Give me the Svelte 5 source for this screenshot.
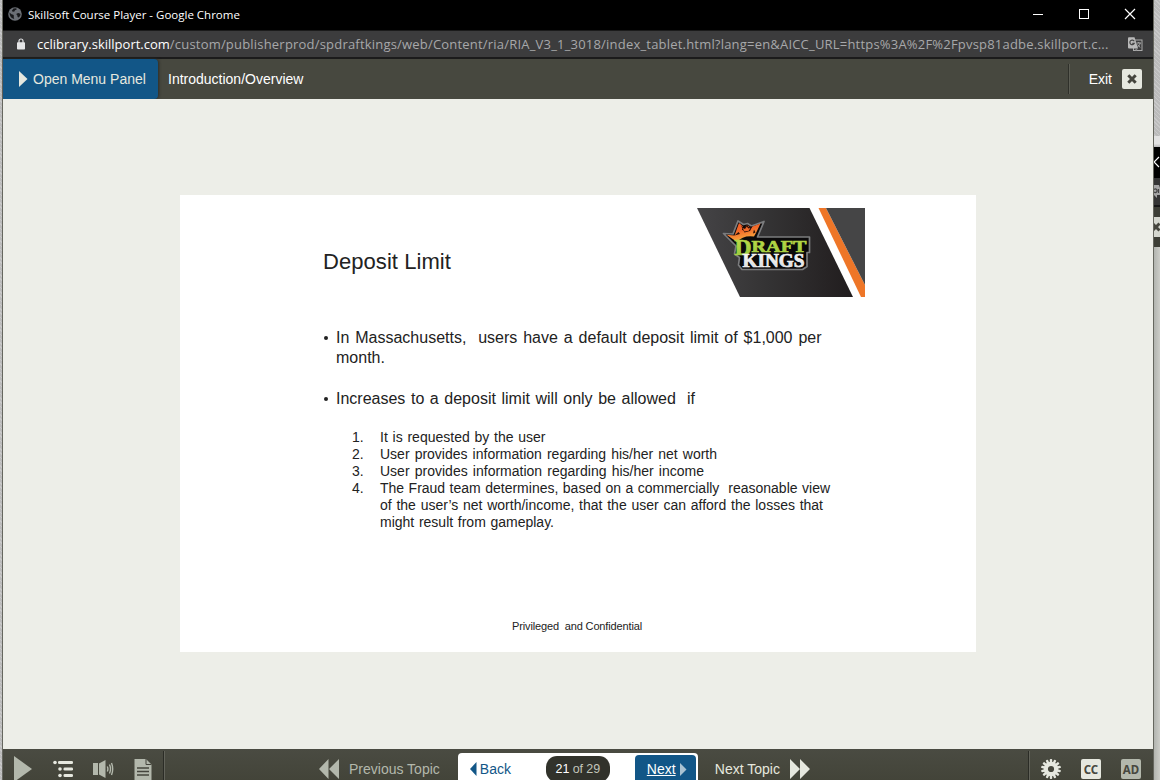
<script>
  const host = 'cclibrary.skillport.com';
  const path = '/custom/publisherprod/spdraftkings/web/Content/ria/RIA_V3_1_3018/index_tablet.html?lang=en&AICC_URL=https%3A%2F%2Fpvsp81adbe.skillport.c...';

  const bullets = [
    [
      { text: 'In Massachusetts,\u00a0 users have a default deposit limit of $1,000 per', ws: 1.45 },
      { text: 'month.', ws: 0 }
    ],
    [{ text: 'Increases to a deposit limit will only be allowed\u00a0 if', ws: 1.12 }]
  ];

  const conditions = [
    [{ text: 'It is requested by the user', ws: 0.88 }],
    [{ text: 'User provides information regarding his/her net worth', ws: 1.18 }],
    [{ text: 'User provides information regarding his/her income', ws: 1.3 }],
    [
      { text: 'The Fraud team determines, based on a commercially\u00a0 reasonable view', ws: 0.57 },
      { text: 'of the user’s net worth/income, that the user can afford the losses that', ws: 0.86 },
      { text: 'might result from gameplay.', ws: 0.77 }
    ]
  ];

  const teeth = Array.from({ length: 14 }, (_, i) => (i * 360) / 14);
</script>

<div class="desktop">
  <div class="window">
    <div class="titlebar">
      <svg class="globe" width="14" height="14" viewBox="0 0 14 14">
        <circle cx="7" cy="7" r="6.8" fill="#6b6f75" />
        <path d="M1.500 5.500 3.500 7.200l1.800.6.6 1-.2 1.300.5 1.900-1.200-.4C2.700 10.600 1.500 8.500 1.500 5.500zM5.500 1.500 8.300 1.200l.4 1.300-1.700.7-.6 1.300-1.600.3L3.800 3.700zM8.800 6.500l2-.4 1.700 1-.3 1.700-1.400 1.800-1.200-.5-.2-1.600-1-.9z" fill="#17181a" />
      </svg>
      <span class="caption">Skillsoft Course Player - Google Chrome</span>
      <div class="controls">
        <svg width="12" height="12" viewBox="0 0 12 12"><path d="M1 6.500h10" stroke="#fff" /></svg>
        <svg width="12" height="12" viewBox="0 0 12 12"><rect x="1.500" y="1.500" width="9" height="9" fill="none" stroke="#fff" /></svg>
        <svg width="12" height="12" viewBox="0 0 12 12"><path d="M1 1l10 10M11 1 1 11" stroke="#fff" stroke-width="1.200" /></svg>
      </div>
    </div>

    <div class="urlbar">
      <svg class="lock" width="8" height="12" viewBox="0 0 8 12">
        <path d="M2 5V3a2 2 0 0 1 4 0v2" fill="none" stroke="#e4e5e6" stroke-width="1.200" />
        <rect y="4.300" width="8" height="7.200" rx=".8" fill="#e4e5e6" />
      </svg>
      <span class="host">{host}</span><span class="path">{path}</span>
      <svg class="translate" width="15" height="15" viewBox="0 0 15 15">
        <rect x="5.500" y="3" width="8.500" height="10.500" fill="#3c3c3d" stroke="#aaa" />
        <path d="M0 1.200Q0 .3 1 .3h5.500L10 11.500H1q-1 0-1-1z" fill="#b9b9b9" />
        <path d="M6.200 4.200A2.300 2.300 0 1 0 6.300 6.300H4.300" fill="none" stroke="#444" stroke-width="1.200" />
        <path d="M8.500 6h4.500M10.700 5v1M12.200 6c-.4 2-1.700 3.500-3 4.200M9.700 7.500c.6 1.300 1.500 2.300 2.600 2.900" fill="none" stroke="#aaa" />
        <path d="M7 11.500h3l-2 2.500z" fill="#888" />
      </svg>
    </div>

    <header>
      <button class="menu-btn">
        <svg width="9" height="16" viewBox="0 0 9 16"><path d="M0 0l8.500 8L0 16z" fill="#e6e8df" /></svg>
        Open Menu Panel
      </button>
      <span class="topic">Introduction/Overview</span>
      <div class="exit">
        <span>Exit</span>
        <svg width="20" height="20" viewBox="0 0 20 20">
          <rect width="20" height="20" rx="2" fill="#e6e8df" />
          <path d="M6.300 6.300l7.400 7.400M13.700 6.300l-7.400 7.400" stroke="#45453d" stroke-width="3" />
        </svg>
      </div>
    </header>

    <main>
      <article class="slide">
        <div class="slide-head">
          <h1>Deposit Limit</h1>
          <svg class="brand" width="168" height="89" viewBox="0 0 168 89">
            <defs>
              <linearGradient id="panel"><stop offset="0" stop-color="#454446" /><stop offset=".45" stop-color="#343334" /><stop offset="1" stop-color="#211d1e" /></linearGradient>
              <linearGradient id="crown" x1="0" y1="0" x2=".4" y2="1"><stop offset="0" stop-color="#f05a28" /><stop offset=".5" stop-color="#f26a2a" /><stop offset="1" stop-color="#fbb040" /></linearGradient>
              <linearGradient id="lime" x1="0" y1="0" x2="0" y2="1"><stop offset="0" stop-color="#c6de4a" /><stop offset="1" stop-color="#8fc63e" /></linearGradient>
              <linearGradient id="silver" x1="0" y1="0" x2="0" y2="1"><stop offset="0" stop-color="#fff" /><stop offset="1" stop-color="#d3d5d8" /></linearGradient>
            </defs>
            <path d="M0 0h112.500L156 89H43z" fill="url(#panel)" />
            <path d="M121.500 0h7.500l39 77v12h-4z" fill="#ee7628" />
            <path d="M129 0h39v77z" fill="#454546" />
            <path d="M26.500 25.500l9.500.5 5-13 5.500 3.500 4-1 4 2.500 12.500-4.500-6.500 15.500h52v15.500h-2.500v14l-4.500 3H45l-3.500-4.500 1-7.500-5-3.500 1.500-8-5-5z" fill="#0b0a0b" stroke="#7b7c7e" stroke-width="1.700" stroke-linejoin="round" />
            <path d="M29.500 26.800l8 .8 4.500-12.500 3.800 3.200-.8 3.700 3 .5 1-5 3 .5 1 3.500 2.500-3 8-3-4.500 9.500-2 3.500q-11-1.500-17 5.500z" fill="url(#crown)" />
            <path d="M44 17.500l3 3 2.500-3.500 3 2.500 3-1.500-2.500 5-5.500 1.500zM37.500 27.500l4-3.500 1.500 2zM56 25.500l1-4 1.500 3z" fill="#2a0f08" />
            <path d="M45.500 20l2.500 1 1.800-2.500 1.500 2 2-.5-1.500 2.700-4.300.8z" fill="#f26a2a" />
            <g font-family="Liberation Serif, serif" font-weight="bold" stroke-width=".7">
              <text fill="url(#lime)" stroke="#aed243"><tspan x="37.500" y="47" font-size="22.500" textLength="17" lengthAdjust="spacingAndGlyphs">D</tspan><tspan x="54.500" y="43.500" font-size="17.500" textLength="55" lengthAdjust="spacingAndGlyphs">RAFT</tspan></text>
              <text x="45.500" y="58.800" font-size="18" textLength="62" lengthAdjust="spacingAndGlyphs" fill="url(#silver)" stroke="#f2f2f2">KINGS</text>
            </g>
          </svg>
        </div>

        <ul class="bullets">
          {#each bullets as lines}
            <li>
              {#each lines as line}<div style:word-spacing="{line.ws}px">{line.text}</div>{/each}
            </li>
          {/each}
        </ul>

        <ol class="conditions">
          {#each conditions as lines, i}
            <li>
              <span class="num">{i + 1}.</span>
              <div>{#each lines as line}<div style:word-spacing="{line.ws}px">{line.text}</div>{/each}</div>
            </li>
          {/each}
        </ol>

        <footer class="confidential">Privileged&nbsp; and Confidential</footer>
      </article>
    </main>

    <nav>
      <div class="tools">
        <svg class="play" width="18" height="26" viewBox="0 0 18 26"><path d="M0 0l18 13L0 26z" fill="#b3b8ac" /></svg>
        <svg class="outline" width="20" height="18" viewBox="0 0 20 18">
          <g fill="#e6e8df">
            <circle cx="2" cy="2.500" r="1.800" /><rect x="5" y="1" width="15" height="3" rx="1.300" />
            <circle cx="7" cy="9" r="1.800" /><rect x="10.500" y="7.500" width="9.500" height="3" rx="1.300" />
            <circle cx="7" cy="15.500" r="1.800" /><rect x="10.500" y="14" width="9.500" height="3" rx="1.300" />
          </g>
        </svg>
        <svg class="sound" width="21" height="18" viewBox="0 0 21 18">
          <path d="M0 3h5v12H0zM6 3.500L12.500 0v18L6 14.500z" fill="#b3b8ac" />
          <path d="M14.300 6.500q1.200 2.500 0 5M16.500 4.500q2 4.500 0 9M18.500 3q2.400 6 0 12" fill="none" stroke="#b3b8ac" stroke-width="1.400" />
        </svg>
        <svg class="doc" width="18" height="21" viewBox="0 0 18 21">
          <path d="M1 0h11l5.500 5.500V21H.5V.5z" fill="#b3b8ac" />
          <path d="M12 0v5.500h5.500" fill="none" stroke="#45453d" />
          <path d="M3 9h12M3 12.500h12M3 16h12" stroke="#45453d" stroke-width="1.300" />
        </svg>
      </div>

      <div class="previous">
        <svg width="20" height="20" viewBox="0 0 20 20"><path d="M9.500 0v20L0 10zM20 0v20L10 10z" fill="#b3b8ac" /></svg>
        <span>Previous Topic</span>
      </div>

      <div class="pager">
        <span class="back"><svg width="7" height="14" viewBox="0 0 7 14"><path d="M6.500 0v14L0 7z" fill="#125687" /></svg>Back</span>
        <span class="count"><b>21</b> of 29</span>
        <span class="next"><u>Next</u><svg width="7" height="13" viewBox="0 0 7 13"><path d="M0 0l6.500 6.500L0 13z" fill="#a9c2d2" /></svg></span>
      </div>

      <div class="following">
        <span>Next Topic</span>
        <svg width="20" height="20" viewBox="0 0 20 20"><path d="M0 0l10 10L0 20zM10 0l10 10-10 10z" fill="#e6e8df" /></svg>
      </div>

      <div class="settings">
        <svg width="20" height="20" viewBox="0 0 20 20">
          <g fill="#e6e8df">
            {#each teeth as a}<rect x="8.800" y="0" width="2.400" height="5" rx=".8" transform="rotate({a} 10 10)" />{/each}
          </g>
          <circle cx="10" cy="10" r="5.200" fill="none" stroke="#e6e8df" stroke-width="4.200" />
        </svg>
        <span class="badge">CC</span>
        <span class="badge dim">AD</span>
      </div>
    </nav>
  </div>

  <div class="behind">
    <div class="b-light"></div>
    <div class="b-title"><svg width="6" height="12" viewBox="0 0 6 12"><path d="M5 1L0 6l5 5" fill="none" stroke="#fff" stroke-width="1.200" /></svg></div>
    <div class="b-url"><svg width="6" height="15" viewBox="0 0 6 15"><path d="M0 1h5l1 3v7H3v3L0 11z" fill="#a5a5a5" /><path d="M0 5.500a1.800 1.800 0 1 1 0 2.500M4.500 5v4" fill="none" stroke="#444" stroke-width="1.200" /></svg></div>
    <div class="b-head"><svg width="6" height="20" viewBox="0 0 6 20"><rect width="6" height="20" fill="#d5d7cf" /><path d="M-1.500 6.500l7 7M5.500 6.500l-7 7" stroke="#45453d" stroke-width="3" /></svg></div>
    <div class="b-page"></div>
  </div>
</div>

<style>
  :global(body) { margin: 0; overflow: hidden; }
  .desktop {
    display: flex; box-sizing: border-box; width: 1160px; height: 780px; padding-left: 2px; overflow: hidden;
    font: 14px/20px "Liberation Sans", Arial, sans-serif;
    background: repeating-linear-gradient(45deg, #c9c9c9 0 1px, #bbb 1px 3px);
  }
  svg { display: block; flex: none; }
  .window { display: flex; flex-direction: column; flex: none; box-sizing: border-box; width: 1152px; height: 780px; border: solid #66675f; border-width: 0 1px; }

  .titlebar { display: flex; align-items: center; flex: none; height: 30px; background: #000; color: #fff; }
  .globe { margin: 0 6px 2px 5px; }
  .caption { font: 11.500px/28px "Open Sans", sans-serif; padding-bottom: 1px; white-space: pre; }
  .controls { display: flex; gap: 34px; margin: 0 17px 2px auto; }

  .urlbar { display: flex; align-items: center; flex: none; box-sizing: border-box; height: 29px; border: solid #1b1b1b; border-width: 1px 0 2px; background: #3c3c3d; font: 13px/26px "Open Sans", sans-serif; white-space: pre; }
  .lock { margin: 0 12px 1px 14px; }
  .host { color: #fff; }
  .path { color: #a7a8aa; letter-spacing: .2px; }
  .translate { margin: 0 10px 0 auto; }

  header { display: flex; flex: none; height: 40px; background: #47483f; color: #fff; line-height: 40px; }
  .menu-btn { display: flex; align-items: center; gap: 5px; box-sizing: border-box; width: 155px; height: 40px; padding: 0 0 0 16px; border: 0; border-radius: 0 4px 4px 0; background: #125687; box-shadow: 1px 0 3px #2c2d28; color: #e6e8df; font: inherit; white-space: nowrap; }
  .topic { margin-left: 10px; }
  .exit { display: flex; align-items: center; align-self: center; gap: 10px; height: 30px; margin-left: auto; padding: 0 11px 0 20px; border-left: 1px solid #2f302a; box-shadow: inset 1px 0 #5c5d54; }

  main { display: flex; flex: none; box-sizing: border-box; height: 650px; padding: 96px 0 0 177px; background: #edeee8; }
  .slide { display: flex; flex-direction: column; box-sizing: border-box; width: 796px; height: 457px; padding: 13px 111px 0 143px; background: #fff; color: #222; }
  .slide-head { display: flex; justify-content: space-between; height: 89px; }
  h1 { margin: 39px 0 0; font-size: 22px; line-height: 30px; font-weight: 400; letter-spacing: .060px; }
  ul, ol { margin: 0; padding: 0; list-style: none; white-space: nowrap; }
  .bullets { display: flex; flex-direction: column; gap: 21px; margin-top: 31px; font-size: 16px; line-height: 20px; }
  .bullets li { position: relative; padding-left: 13px; }
  .bullets li::before { content: ""; position: absolute; left: 1px; top: 8px; width: 4px; height: 4px; border-radius: 50%; background: #222; }
  .conditions { margin: 20px 0 0 29px; line-height: 17px; }
  .conditions li { display: flex; }
  .num { width: 28px; }
  .confidential { margin: 88px 0 0 189px; font-size: 11px; line-height: 14px; letter-spacing: -.14px; white-space: nowrap; }

  nav { display: flex; flex: none; height: 31px; overflow: hidden; background: linear-gradient(#4a4b42, #434439); color: #b3b8ac; white-space: nowrap; line-height: 40px; }
  .tools { display: flex; box-sizing: border-box; width: 161px; height: 40px; margin-top: 2px; padding-left: 11px; border-right: 1px solid #2b2c26; box-shadow: 1px 0 #62635a; }
  .play { margin-top: 5px; }
  .outline { margin: 9px 0 0 21px; }
  .sound { margin: 9px 0 0 20px; }
  .doc { margin: 8px 0 0 20px; }
  .previous { display: flex; align-items: center; gap: 10px; height: 40px; margin-left: 155px; }
  .pager { display: flex; box-sizing: border-box; width: 240px; height: 40px; margin: 4px 0 0 18px; padding: 2px 1px 0 12px; border-radius: 4px 4px 0 0; background: #fff; line-height: 28px; }
  .back { display: flex; align-items: center; gap: 3px; width: 76px; height: 28px; color: #125687; }
  .count { width: 64px; height: 26px; margin: 1px 25px 0 0; border-radius: 11px; background: #31322b; color: #c2c5ba; font-size: 12.500px; line-height: 26px; text-align: center; letter-spacing: -.1px; }
  .count b { color: #fff; font-weight: 400; }
  .next { display: flex; align-items: center; gap: 4px; box-sizing: border-box; width: 61px; height: 28px; padding-left: 12px; border-radius: 4px 4px 0 0; background: #125687; color: #fff; }
  .following { display: flex; align-items: center; gap: 10px; height: 40px; margin-left: 17px; color: #e6e8df; }
  .settings { display: flex; gap: 20px; box-sizing: border-box; height: 40px; margin: 2px 0 0 auto; padding: 8px 12px 0 12px; border-left: 1px solid #2b2c26; box-shadow: inset 1px 0 #62635a; }
  .badge { width: 20px; height: 20px; border-radius: 2px; background: #e6e8df; color: #47483f; font: bold 11.500px/21px "Noto Sans", sans-serif; text-align: center; }
  .dim { background: #b3b8ac; }

  .behind { display: flex; flex-direction: column; flex: 1; padding-top: 136px; }
  .b-light { flex: none; height: 11px; background: linear-gradient(#e2e2e2 70%, #b8b8b8); }
  .b-title { flex: none; box-sizing: border-box; height: 31px; padding-top: 9px; background: #000; }
  .b-url { flex: none; box-sizing: border-box; height: 29px; padding-top: 6px; border-bottom: 2px solid #161616; background: #353535; }
  .b-head { flex: none; box-sizing: border-box; height: 40px; padding-top: 10px; background: #3d3e36; }
  .b-page { flex: 1; background: linear-gradient(90deg, #b2b4af, #cccdc8); }
</style>
